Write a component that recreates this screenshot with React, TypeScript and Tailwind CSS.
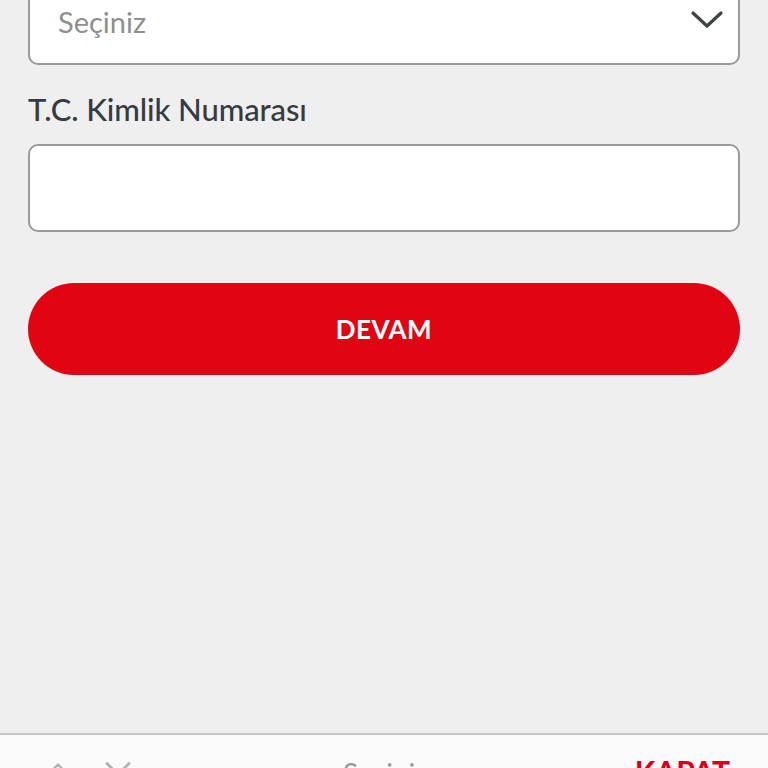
import { ChevronDown, ChevronUp } from 'lucide-react';

export default function App() {
  return (
    <div className="h-[768px] overflow-hidden bg-[#efefef] flex flex-col font-['Lato','Open_Sans',sans-serif]">
      <div className="flex-1 flex flex-col px-[28px]">
        {/* Select */}
        <div className="-mt-[24px] h-[89px] bg-white border-2 border-[#9a9a9a] rounded-[10px] flex items-center justify-between pl-[28px] pr-[14px] pt-[2px]">
          <span className="text-[29px] text-[#8f8f8f]">Seçiniz</span>
          <svg width="34" height="22" viewBox="0 0 34 22" fill="none" className="mb-[4px]">
            <path d="M3 4 L17 17 L31 4" stroke="#3f4246" strokeWidth="3.2" strokeLinecap="round" strokeLinejoin="round" />
          </svg>
        </div>

        {/* T.C. Kimlik */}
        <label className="mt-[24px] text-[31px] leading-[40px] font-medium text-[#353b42] tracking-[-0.1px]">T.C. Kimlik Numarası</label>
        <div className="mt-[15px] h-[88px] bg-white border-2 border-[#9a9a9a] rounded-[10px]" />

        <button className="mt-[51px] h-[92px] rounded-full bg-[#e10514] text-white text-[26px] font-bold tracking-[0.5px]">
          DEVAM
        </button>
      </div>

      {/* Keyboard accessory bar */}
      <div className="h-[35px] shrink-0 border-t-2 border-[#c6c6c6] bg-[#fafafa] relative">
        <div className="absolute left-0 right-0 top-[24px] flex items-start px-[40px]">
          <ChevronUp size={36} strokeWidth={1.5} className="text-[#b0b0b0] -mt-[8px]" />
          <ChevronDown size={44} strokeWidth={1.5} className="text-[#b0b0b0] ml-[20px] -mt-[12px]" />
          <span className="ml-[203px] text-[28px] leading-none text-[#9a9a9a]">Seçiniz</span>
          <span className="ml-auto mr-[-2px] text-[30px] leading-none font-bold text-[#d6001c] -mt-[3px]">KAPAT</span>
        </div>
      </div>
    </div>
  );
}
